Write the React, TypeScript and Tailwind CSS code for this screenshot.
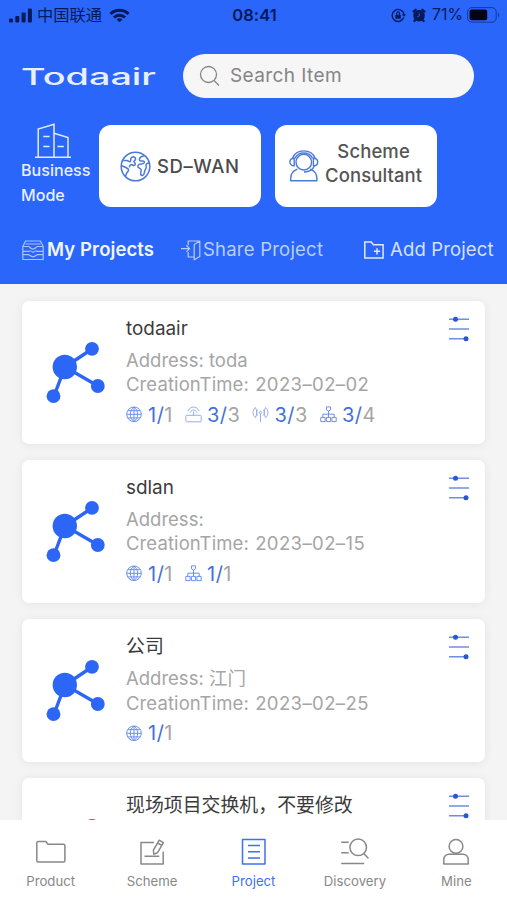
import type { ReactNode } from "react";

type StatKind = "globe" | "router" | "antenna" | "switch";
type Stat = { kind: StatKind; online: number; total: number };
type Project = { name: string; address?: string; created?: string; stats: Stat[] };

const projects: Project[] = [
  {
    name: "todaair",
    address: "toda",
    created: "2023–02–02",
    stats: [
      { kind: "globe", online: 1, total: 1 },
      { kind: "router", online: 3, total: 3 },
      { kind: "antenna", online: 3, total: 3 },
      { kind: "switch", online: 3, total: 4 },
    ],
  },
  {
    name: "sdlan",
    address: "",
    created: "2023–02–15",
    stats: [
      { kind: "globe", online: 1, total: 1 },
      { kind: "switch", online: 1, total: 1 },
    ],
  },
  { name: "公司", address: "江门", created: "2023–02–25", stats: [{ kind: "globe", online: 1, total: 1 }] },
  { name: "现场项目交换机，不要修改", stats: [] },
];

const StatusBar = () => (
  <div className="grid h-[30px] grid-cols-3 items-center pl-[9px] pr-[7px] text-[#061a58]">
    <div className="flex items-center">
      <svg width="24" height="15" viewBox="0 0 24 15" fill="currentColor">
        <rect x="0" y="10.5" width="4" height="4" rx="1" />
        <rect x="6.3" y="8" width="4" height="6.5" rx="1" />
        <rect x="12.6" y="4.5" width="4" height="10" rx="1" />
        <rect x="18.9" y="0.5" width="4" height="14" rx="1" />
      </svg>
      <span className="ml-[4px] text-[16.3px] leading-5">中国联通</span>
      <svg className="ml-[7px]" width="21" height="15" viewBox="0 0 22 15" fill="none" stroke="currentColor" strokeWidth="3">
        <path d="M1.5 6a13.4 13.4 0 0 1 19 0" />
        <path d="M5.2 9.6a8.2 8.2 0 0 1 11.6 0" />
        <path d="M11 14.6 8 11.7a4.2 4.2 0 0 1 6 0z" fill="currentColor" stroke="none" />
      </svg>
    </div>
    <div className="text-center text-[16.5px] font-semibold leading-5 tracking-[0.1px]">08:41</div>
    <div className="flex items-center justify-end">
      <svg width="15" height="15" viewBox="0 0 15 15" fill="none" stroke="currentColor" strokeWidth="1.4">
        <path d="M12.8 9.5A6 6 0 1 1 13 6" />
        <path d="m10.8 6.2 2.2 2.6 2-2.6z" fill="currentColor" stroke="none" />
        <rect x="4.4" y="6.8" width="5.4" height="4" rx="0.6" fill="currentColor" stroke="none" />
        <path d="M5.6 7V5.4a1.5 1.5 0 0 1 3 0V7" strokeWidth="1.1" />
      </svg>
      <svg className="ml-[6px]" width="14" height="15" viewBox="0 0 14 15">
        <circle cx="7" cy="7.6" r="5.8" fill="currentColor" />
        <path d="M1.5 3.600 3.600 1.700M12.500 3.600 10.400 1.700M3.200 12l-.8 1M10.800 12l.8 1" stroke="currentColor" strokeWidth="2.2" strokeLinecap="round" />
        <path d="M7.2 4.8v3.200L5.200 9" fill="none" stroke="#2b66fb" strokeWidth="0.8" />
      </svg>
      <span className="ml-[6px] text-[15.8px] leading-5">71%</span>
      <svg className="ml-[4px]" width="33" height="16" viewBox="0 0 33 16">
        <rect x="0.6" y="0.6" width="28.6" height="14.6" rx="4.2" fill="none" stroke="currentColor" strokeOpacity="0.6" />
        <rect x="2.6" y="2.6" width="17.6" height="10.6" rx="2" fill="#010515" />
        <path d="M31 5.5c1.6.8 1.6 4 0 4.8z" fill="currentColor" fillOpacity="0.6" />
      </svg>
    </div>
  </div>
);

const BuildingIcon = () => (
  <svg width="36" height="36" viewBox="0 0 36 36" fill="none" stroke="#dfe9ff" strokeWidth="1.5">
    <path d="M0 34.2h36M3.2 34V6L19 1.2V34M19 10.2l14 4.3V34M8.3 13.6h6.3M8.3 23.4h6.3M22.5 23.4h6.3" />
  </svg>
);

const EarthIcon = () => (
  <svg width="31" height="31" viewBox="0 0 31 31" fill="none" stroke="#4c78d8" strokeWidth="1.5" strokeLinejoin="round">
    <circle cx="15.5" cy="15.5" r="14.3" />
    <path d="M3.200 9.400h3.600c1.400 0 2 1.800 3.200 1.400 1.200-.6.400-2.400 1-3.600.6-1.400 2.600-1.800 3.800-.8 1.200 1 .8 2.600-.2 3.200-1 .6-1 1.200 0 2 1.200.8.800 2.400-.4 2.800-1.400.2-2-1-3.200-.8-1.200.4-1 1.800-2 2.600" />
    <path d="M1.400 14.500c2.400 1.200 4.800 1.800 6.600 3.400 1.200 1.200.2 2.600-.8 3.400-1.200 1-.8 2.600-1.800 4" />
    <path d="M24.500 4.800c-2 .2-4.200 1.200-5 3-.6 1.600.8 2.600 2.400 2.200 1.800-.4 2.800.6 2.400 1.800-.4 1-2 1-3.400 1.200-2 .2-3.200 1-3 2.600.4 1.800 2.800 1.400 3.200 3.200.4 1.800-1 3.400-.2 5 .6 1.200 2 .8 2.800-.4 1-1.600.6-3.200 1.600-4.600 1-1.400 1.200-2.800.8-4.400-.2-1.200.8-2.200 3.200-2.600" />
  </svg>
);

const HeadsetIcon = () => (
  <svg width="30" height="32" viewBox="0 0 30 32" fill="none" stroke="#4c78d8" strokeWidth="1.4" strokeLinejoin="round">
    <circle cx="14.800" cy="12.200" r="7.800" />
    <path d="M3.600 8.200C5.200 3.600 9.400.9 14.800.9s9.600 2.700 11.200 7.300M6 8.400c1.500-3.300 4.700-5.400 8.800-5.400s7.300 2.100 8.800 5.400" />
    <path d="M5.200 8.200v7.600C2.600 15.800.9 14.200.9 12s1.700-3.800 4.300-3.800zM24.400 8.200v7.600c2.600 0 4.300-1.600 4.300-3.800s-1.700-3.800-4.300-3.800z" />
    <path d="M25.500 15.600c-1.400 3.800-5.400 6.400-10.500 6.400" />
    <path d="M8.400 19.200C4.600 20.600 1.700 24 1.700 28.400v2.400h26.200v-2.400c0-4.400-2.900-7.800-6.700-9.200" />
  </svg>
);

const DrawerIcon = () => (
  <svg width="22" height="21" viewBox="0 0 22 21" fill="none" stroke="#a9c2ff" strokeWidth="1.2" strokeLinejoin="round">
    <path d="M.8 6.500 3.600 1h14.800l2.800 5.500v13H.8zM.8 6.500h5.600c1.400 0 2 2.600 4.600 2.600s3.200-2.600 4.600-2.600h5.600M.8 11.400h5.400c1.600 0 2.200-1.600 4.800 1 2.600-2.600 3.200-1 4.800-1h5.400M.8 14.600h5.400c1.600 0 2.200 2.200 4.800 2.200s3.200-2.200 4.800-2.200h5.400M3.500 4h15" />
  </svg>
);

const DoorIcon = () => (
  <svg width="20" height="21" viewBox="0 0 20 21" fill="none" stroke="#b9ceff" strokeWidth="1.2" strokeLinejoin="round">
    <path d="M7.200 5V1h11.600v15.500l-5.600 3.300V4.500L18.800 1M7.200 1.200v4M0 8.700h8.400M5.400 5.500l3.200 3.200-3.200 3.200M7.200 12v5h6" />
  </svg>
);

const AddFolderIcon = () => (
  <svg width="20" height="18" viewBox="0 0 20 18" fill="none" stroke="#dfe9ff" strokeWidth="1.500">
    <path d="M.8 16.900V1h6.400l2.200 2.800h9.700v13.100zM13 7.200v6.200M9.900 10.300h6.200" />
  </svg>
);

const StatIcon = ({ kind }: { kind: StatKind }) => (
  <svg width="17" height="17" viewBox="0 0 17 17" fill="none" stroke="#6a8ff0" strokeWidth="1" className="shrink-0">
    {kind === "globe" && (
      <path d="M8 1a7.300 7.300 0 1 0 0 14.600A7.300 7.300 0 0 0 8 1zM8 1v14.600M.7 8.300h14.600M1.900 4.700h12.200M1.900 11.900h12.200M8 1C3.100 4.600 3.100 12 8 15.600M8 1c4.900 3.600 4.900 11 0 14.600" />
    )}
    {kind === "router" && (
      <g stroke="#94adf3">
        <rect x=".8" y="9.300" width="15.400" height="6.500" rx="1" />
        <path d="M8.500 9.300V5.600M2.800 5.200C5.600-.4 11.400-.4 14.200 5.200M5.200 6.500c1.700-3.300 4.900-3.300 6.600 0" />
      </g>
    )}
    {kind === "antenna" && (
      <g stroke="#94adf3">
        <circle cx="8.500" cy="6.500" r="1.200" />
        <path d="M8.500 8v8M5.700 3.600c-1.300 1.800-1.300 4.200 0 6M11.300 3.600c1.300 1.800 1.300 4.200 0 6M3.500 1.500C.2 3.800.2 9.400 3.500 11.700 5 8.500 5 4.700 3.500 1.500zM13.500 1.500c3.300 2.300 3.300 7.900 0 10.200-1.500-3.200-1.500-7 0-10.200z" />
      </g>
    )}
    {kind === "switch" && (
      <path d="M6.500.9h4v2.900L8.500 5 6.500 3.800zM8.500 5v6M2.800 11V8.200h11.400V11M.8 11.400h4.300v4.200H.8zM6.400 11.400h4.200v4.200H6.400zM11.900 11.400h4.300v4.200h-4.300z" />
    )}
  </svg>
);

const TopologyIcon = () => (
  <svg width="60" height="63" viewBox="0 0 60 63" fill="#2b66f6" stroke="#2b66f6" className="shrink-0">
    <path d="M46 8 19 26 52 45M19 26 8 55" fill="none" strokeWidth="3.400" />
    <g stroke="none">
      <circle cx="18.800" cy="26" r="12.200" />
      <circle cx="46" cy="7.800" r="6.900" />
      <circle cx="51.800" cy="45" r="6.900" />
      <circle cx="7.500" cy="55.200" r="6.900" />
    </g>
  </svg>
);

const SlidersIcon = () => (
  <svg width="22" height="26" viewBox="0 0 22 26" stroke="#6f8fe0" strokeWidth="1.400">
    <path d="M1 3.200h20M1 13h20M1 22.700h18" />
    <circle cx="7.500" cy="3.200" r="2.500" fill="#2857d4" stroke="none" />
    <circle cx="18" cy="22.700" r="2.500" fill="#2857d4" stroke="none" />
  </svg>
);

const ProjectCard = ({ project }: { project: Project }) => (
  <article className="flex h-[143px] shrink-0 rounded-[7px] bg-white pl-6 pr-[15px] shadow-[0_1px_10px_rgba(0,0,0,0.07)]">
    <div className="pt-[40px]">
      <TopologyIcon />
    </div>
    <div className="min-w-0 flex-1 whitespace-nowrap pl-5 pt-4">
      <h2 className="text-[18.900px] leading-6 text-[#3b3b3b]">{project.name}</h2>
      {project.address !== undefined && (
        <p className="mt-[7px] text-[18.500px] leading-[24.500px] text-[#a5a5a5]">Address: {project.address}</p>
      )}
      {project.created && (
        <p className="text-[18.500px] leading-[24.500px] text-[#a5a5a5]">
          <span className="tracking-[0.100px]">CreationTime: </span>
          <span className="ml-[1px] tracking-[0.400px]">{project.created}</span>
        </p>
      )}
      <ul className="mt-[6px] flex h-6 items-center gap-[12px]">
        {project.stats.map((s) => (
          <li key={s.kind} className="flex items-center gap-[5px] text-[20px] leading-6 tracking-[0.500px]">
            <StatIcon kind={s.kind} />
            <span className="text-[#a5a5a5]">
              <span className="text-[#4370dc]">{s.online}/</span>
              {s.total}
            </span>
          </li>
        ))}
      </ul>
    </div>
    <div className="pt-[15px]">
      <SlidersIcon />
    </div>
  </article>
);

const NavItem = ({ label, active, children }: { label: string; active?: boolean; children: ReactNode }) => (
  <div className={`flex flex-1 flex-col items-center pt-[18px] ${active ? "text-[#3f72ea]" : "text-[#888888]"}`}>
    <svg width="30" height="30" viewBox="0 0 30 30" fill="none" stroke="currentColor" strokeWidth="1.500" strokeLinejoin="round">
      {children}
    </svg>
    <span className="mt-[3px] text-[13.200px] leading-5">{label}</span>
  </div>
);

export default function App() {
  return (
    <div className="flex h-[900px] w-[507px] flex-col overflow-hidden bg-[#f4f4f4] font-['Inter','Noto_Sans_CJK_SC',sans-serif]">
      <header className="h-[284px] shrink-0 bg-[#2b66fb]">
        <StatusBar />
        <div className="mt-[24px] flex items-center">
          <svg className="ml-5 shrink-0 overflow-visible" width="137" height="32" viewBox="0 0 137 32" role="img">
            <text x="1" y="24.500" textLength="135" lengthAdjust="spacingAndGlyphs" fontSize="22.500" fontWeight="500" fill="#e8f0ff">
              Todaair
            </text>
          </svg>
          <div className="ml-[26px] flex h-[44px] w-[291px] items-center rounded-full bg-[#f6f6f6] pl-4 text-[#858585]">
            <svg width="22" height="22" viewBox="0 0 22 22" fill="none" stroke="currentColor" strokeWidth="1.300">
              <circle cx="9.500" cy="9.500" r="8" />
              <path d="m15 15.500 5 5" />
            </svg>
            <span className="ml-[9px] text-[19px] tracking-[0.400px]">Search Item</span>
          </div>
        </div>

        <div className="mt-[27px] flex h-[82px]">
          <div className="w-[99px] pl-[21px] text-[16.100px] font-medium leading-[24.500px] text-[#e8f0ff]">
            <div className="-mt-[2px] pl-[14px]">
              <BuildingIcon />
            </div>
            <div className="-mt-px">Business</div>
            <div>Mode</div>
          </div>
          <div className="flex w-[162px] items-center rounded-[12px] bg-white pl-[21px] text-[18.500px] font-medium text-[#4b4b4b]">
            <EarthIcon />
            <span className="ml-[6px] mt-[2px] tracking-[0.600px]">SD–WAN</span>
          </div>
          <div className="ml-[14px] flex w-[162px] items-center rounded-[12px] bg-white pl-[14px] text-[18.500px] font-medium leading-6 text-[#555555]">
            <HeadsetIcon />
            <span className="-mt-[7px] ml-[6px] text-center tracking-[0.100px]">
              Scheme
              <br />
              Consultant
            </span>
          </div>
        </div>

        <div className="mt-[29px] flex h-7 items-center whitespace-nowrap pl-[22px] text-[18.500px]">
          <div className="flex w-[159px] items-center gap-[3px] font-semibold text-[#f0f5ff]">
            <DrawerIcon />
            <span className="tracking-[0.100px]">My Projects</span>
          </div>
          <div className="flex w-[183px] items-center gap-[2px] text-[#b9ceff]">
            <DoorIcon />
            <span className="tracking-[0.220px]">Share Project</span>
          </div>
          <div className="flex items-center gap-[6px] text-[#d5e2ff]">
            <AddFolderIcon />
            <span className="tracking-[0.150px]">Add Project</span>
          </div>
        </div>
      </header>

      <main className="flex min-h-0 flex-1 flex-col gap-[16.300px] overflow-hidden px-[22px] pt-[16.500px]">
        {projects.map((p) => (
          <ProjectCard key={p.name} project={p} />
        ))}
      </main>

      <nav className="flex h-20 shrink-0 bg-white">
        <NavItem label="Product">
          <path d="M.8 5a1.500 1.500 0 0 1 1.500-1.500h7.500l2.200 2.800h15.400a1.500 1.500 0 0 1 1.500 1.500v14.700a1.500 1.500 0 0 1-1.500 1.500H2.300A1.500 1.500 0 0 1 .8 22.500z" />
        </NavItem>
        <NavItem label="Scheme">
          <path d="M17 4.500H4v21.500h22.200V13.500M7.500 18.300h14.800M22.200 2.200l4.200 2.400-5.800 10-3.800 1.600-.4-4zM20.600 5l4.200 2.400" />
        </NavItem>
        <NavItem label="Project" active>
          <path d="M3.500 1.500H26v24.500H3.500zM9 7.500h12M9 13.700h12M9 20h12" />
        </NavItem>
        <NavItem label="Discovery">
          <circle cx="18.200" cy="9.300" r="8.300" />
          <path d="m23.800 15.500 4.700 5M1.200 4.200h7.500M1.200 14.800h7.500M1.200 25.500h23" />
        </NavItem>
        <NavItem label="Mine">
          <circle cx="15" cy="8.300" r="6.900" />
          <path d="M2.800 26v-4.700a5 5 0 0 1 5-5h14.400a5 5 0 0 1 5 5V26z" />
        </NavItem>
      </nav>
    </div>
  );
}
